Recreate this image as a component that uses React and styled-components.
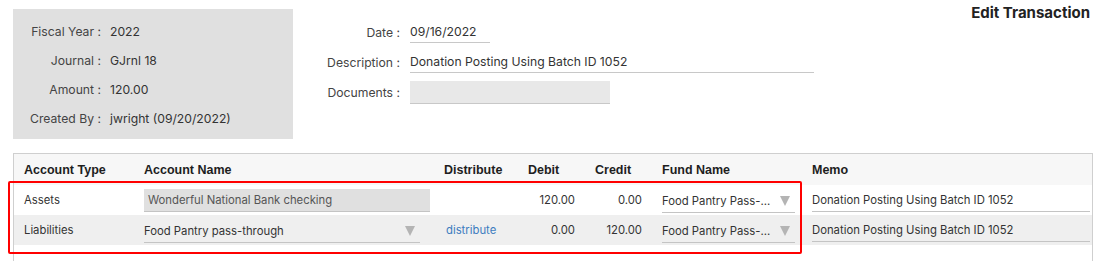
import React from "react";
import styled, { createGlobalStyle } from "styled-components";

const Global = createGlobalStyle`
  html, body { margin: 0; padding: 0; background: #fff; }
  body { font-family: Inter, "Noto Sans", sans-serif; color: #333; font-size: 12.2px; }
`;

const Page = styled.div`
  width: 1095px;
  height: 261px;
  overflow: hidden;
`;

const Top = styled.div`
  display: flex;
  align-items: flex-start;
  padding: 0 5px 0 13px;
`;

const InfoBox = styled.div`
  margin-top: 9px;
  width: 280px;
  height: 130px;
  box-sizing: border-box;
  background: #e0e0e0;
  padding-top: 8px;
  display: grid;
  grid-template-columns: 88px 1fr;
  grid-auto-rows: 29px;
  column-gap: 9px;
  align-items: center;
`;

const InfoLabel = styled.div`
  text-align: right;
  color: #444;
  white-space: nowrap;
`;

const InfoValue = styled.div`
  color: #333;
  white-space: nowrap;
`;

const Form = styled.div`
  margin-top: 21px;
  margin-left: 7px;
  display: grid;
  grid-template-columns: 100px auto;
  grid-auto-rows: 22px;
  column-gap: 10px;
  row-gap: 8px;
  align-items: stretch;
`;

const FormLabel = styled.div`
  text-align: right;
  color: #444;
  display: flex;
  align-items: center;
  justify-content: flex-end;
  white-space: nowrap;
`;

const Field = styled.div`
  width: ${(p) => p.w}px;
  box-sizing: border-box;
  border-bottom: 1px solid #c8c8c8;
  background: ${(p) => (p.filled ? "#e8e8e8" : "transparent")};
  height: ${(p) => p.h || 22}px;
  display: flex;
  align-items: center;
  color: #333;
  white-space: nowrap;
`;

const Title = styled.div`
  margin-left: auto;
  margin-top: 3px;
  font-weight: 700;
  font-size: 15px;
  color: #222;
`;

const TableWrap = styled.div`
  position: relative;
  margin: 14px 2px 0 13px;
`;

const Table = styled.div`
  border: 1px solid #cfcfcf;
  border-bottom: none;
  display: grid;
  grid-template-columns: 120px 300px 84px 67px 67px 150px 1fr;
`;

const Row = styled.div`
  display: contents;
`;

const Cell = styled.div`
  height: ${(p) => p.h || 30}px;
  box-sizing: border-box;
  background: ${(p) => p.bg};
  padding: 0 ${(p) => (p.pr != null ? p.pr : 10)}px 0 ${(p) => (p.pl != null ? p.pl : 10)}px;
  display: flex;
  align-items: center;
  justify-content: ${(p) => (p.right ? "flex-end" : "flex-start")};
  white-space: nowrap;
  color: #333;
  font-size: 11.3px;
`;

const HeadCell = styled(Cell)`
  font-family: "Liberation Sans", Arial, sans-serif;
  font-weight: 700;
  font-size: 12.5px;
  color: #1e1e1e;
`;

const Input = styled.div`
  width: ${(p) => p.w}px;
  height: 23px;
  box-sizing: border-box;
  background: ${(p) => (p.filled ? "#e0e0e0" : "transparent")};
  border-bottom: 1px solid #c4c4c4;
  padding-left: ${(p) => (p.filled ? 4 : 0)}px;
  display: flex;
  align-items: center;
  color: ${(p) => (p.filled ? "#555" : "#333")};
  margin-top: ${(p) => p.mt || 0}px;
  overflow: hidden;
`;

const SelectBox = styled(Input)`
  justify-content: space-between;
  padding-right: 5px;
`;

const Arrow = styled.span`
  width: 0;
  height: 0;
  border-left: 5px solid transparent;
  border-right: 5px solid transparent;
  border-top: 10px solid #b4b4b4;
  flex: none;
`;

const Link = styled.span`
  color: #3d7cbf;
  padding-left: 2px;
`;

const Highlight = styled.div`
  position: absolute;
  left: -5px;
  top: 28px;
  width: 794px;
  height: 73px;
  box-sizing: border-box;
  border: 2px solid #f00;
  border-radius: 2px;
  pointer-events: none;
`;

const headers = ["Account Type", "Account Name", "Distribute", "Debit", "Credit", "Fund Name", "Memo"];

const rows = [
  { type: "Assets", account: "Wonderful National Bank checking", filled: true, dist: "", debit: "120.00", credit: "0.00", bg: "#fff" },
  { type: "Liabilities", account: "Food Pantry pass-through", filled: false, dist: "distribute", debit: "0.00", credit: "120.00", bg: "#efefef" },
];

export default function App() {
  return (
    <Page>
      <Global />
      <Top>
        <InfoBox>
          <InfoLabel>Fiscal Year :</InfoLabel>
          <InfoValue>2022</InfoValue>
          <InfoLabel>Journal :</InfoLabel>
          <InfoValue>GJrnl 18</InfoValue>
          <InfoLabel>Amount :</InfoLabel>
          <InfoValue>120.00</InfoValue>
          <InfoLabel>Created By :</InfoLabel>
          <InfoValue>jwright (09/20/2022)</InfoValue>
        </InfoBox>
        <Form>
          <FormLabel>Date :</FormLabel>
          <Field w={80}>09/16/2022</Field>
          <FormLabel>Description :</FormLabel>
          <Field w={404}>Donation Posting Using Batch ID 1052</Field>
          <FormLabel>Documents :</FormLabel>
          <Field w={200} h={23} filled />
        </Form>
        <Title>Edit Transaction</Title>
      </Top>
      <TableWrap>
        <Table>
          <Row>
            {headers.map((h) => (
              <HeadCell key={h} bg="#f7f7f7" h={31}>{h}</HeadCell>
            ))}
          </Row>
          {rows.map((r) => (
            <Row key={r.type}>
              <Cell bg={r.bg}>{r.type}</Cell>
              <Cell bg={r.bg} pr={0}>
                {r.filled ? (
                  <Input w={286} filled>{r.account}</Input>
                ) : (
                  <SelectBox w={276} mt={2}>{r.account}<Arrow /></SelectBox>
                )}
              </Cell>
              <Cell bg={r.bg}>{r.dist && <Link>{r.dist}</Link>}</Cell>
              <Cell bg={r.bg} right>{r.debit}</Cell>
              <Cell bg={r.bg} right>{r.credit}</Cell>
              <Cell bg={r.bg} pr={7}>
                <SelectBox w={133} mt={2}>Food Pantry Pass-...<Arrow /></SelectBox>
              </Cell>
              <Cell bg={r.bg} pr={2}>
                <Input w={278}>Donation Posting Using Batch ID 1052</Input>
              </Cell>
            </Row>
          ))}
          <Row>
            {headers.map((h) => (
              <Cell key={h} bg="#fff" h={20} />
            ))}
          </Row>
        </Table>
        <Highlight />
      </TableWrap>
    </Page>
  );
}
